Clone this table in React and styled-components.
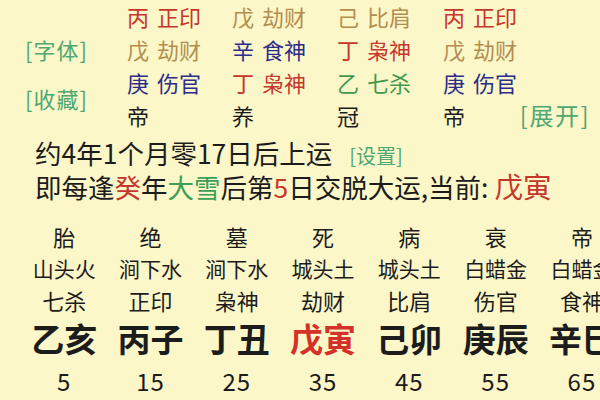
import React from "react";
import styled, {createGlobalStyle} from "styled-components";

const GlobalStyle = createGlobalStyle`
  html, body {
    margin: 0;
    padding: 0;
    background: #fcf7c8;
  }
  body {
    font-family: "Noto Sans CJK SC", "Noto Sans", sans-serif;
    color: #1c1c1c;
  }
`;

const colors = {
    red: "#c5372c",
    tan: "#b48e4f",
    navy: "#2c2c8a",
    green: "#3f9a4c",
    link: "#4ea874",
    ink: "#1c1c1c",
};

const Page = styled.div`
  width: 600px;
  height: 400px;
  overflow: hidden;
  background: #fcf7c8;
`;

const PillarGrid = styled.div`
  display: grid;
  grid-template-columns: 127px 105px 105px 106px 1fr;
  grid-template-rows: repeat(4, 33px);
  margin-top: -1px;
`;

const Label = styled.div`
  grid-column: 1;
  grid-row: ${p => p.$row};
  align-self: center;
  padding-left: 25px;
  font-size: 22px;
  line-height: 26px;
  letter-spacing: 1px;
  color: ${colors.link};
`;

const Cell = styled.div`
  display: flex;
  align-items: center;
  gap: 8px;
  font-size: 22px;
  color: ${p => p.$color || colors.ink};
  white-space: nowrap;
`;

const Expand = styled.span`
  margin-left: auto;
  margin-right: 10px;
  font-size: 24px;
  letter-spacing: 1.5px;
  color: ${colors.link};
`;

const Info = styled.div`
  padding-left: 35px;
  margin-top: 5px;
`;

const InfoLine = styled.div`
  display: flex;
  align-items: baseline;
  height: 33px;
  line-height: 33px;
  font-size: 26.5px;
  white-space: nowrap;
`;

const Tint = styled.span`
  color: ${p => p.$color};
  font-size: ${p => p.$size || "inherit"};
`;

const Setting = styled.span`
  margin-left: 17px;
  font-size: 20px;
  color: ${colors.link};
`;

const LuckGrid = styled.div`
  display: grid;
  grid-template-columns: repeat(8, 86.3px);
  grid-template-rows: 32px 32px 32px 44px 40px;
  padding-left: 21px;
  margin-top: 18px;
  text-align: center;
  white-space: nowrap;
`;

const LuckText = styled.div`
  display: flex;
  align-items: center;
  justify-content: center;
  font-size: ${p => p.$size}px;
  font-weight: ${p => (p.$bold ? 700 : 400)};
  letter-spacing: ${p => p.$spacing || 0}px;
  color: ${p => p.$color || colors.ink};
`;

const pillars = [
    [["丙", "正印", "red"], ["戊", "劫财", "tan"], ["庚", "伤官", "navy"], "帝"],
    [["戊", "劫财", "tan"], ["辛", "食神", "navy"], ["丁", "枭神", "red"], "养"],
    [["己", "比肩", "tan"], ["丁", "枭神", "red"], ["乙", "七杀", "green"], "冠"],
    [["丙", "正印", "red"], ["戊", "劫财", "tan"], ["庚", "伤官", "navy"], "帝"],
];

const luck = [
    ["胎", "山头火", "七杀", "乙亥", "5"],
    ["绝", "涧下水", "正印", "丙子", "15"],
    ["墓", "涧下水", "枭神", "丁丑", "25"],
    ["死", "城头土", "劫财", "戊寅", "35", true],
    ["病", "城头土", "比肩", "己卯", "45"],
    ["衰", "白蜡金", "伤官", "庚辰", "55"],
    ["帝", "白蜡金", "食神", "辛巳", "65"],
];

function App() {
    return (
        <Page>
            <GlobalStyle/>
            <PillarGrid>
                <Label $row={2}>[字体]</Label>
                <Label $row="3 / span 2">[收藏]</Label>
                {pillars.map((col, c) => (
                    <React.Fragment key={c}>
                        {col.slice(0, 3).map(([stem, god, tone], r) => (
                            <Cell key={r} $color={colors[tone]} style={{gridColumn: c + 2, gridRow: r + 1}}>
                                <span>{stem}</span><span>{god}</span>
                            </Cell>
                        ))}
                        <Cell style={{gridColumn: c + 2, gridRow: 4}}>
                            {col[3]}
                            {c === 3 ? <Expand>[展开]</Expand> : null}
                        </Cell>
                    </React.Fragment>
                ))}
            </PillarGrid>
            <Info>
                <InfoLine>
                    约4年1个月零17日后上运
                    <Setting>[设置]</Setting>
                </InfoLine>
                <InfoLine>
                    即每逢<Tint $color={colors.red}>癸</Tint>年<Tint $color="#3e9e57">大雪</Tint>后第<Tint $color={colors.red}>5</Tint>日交脱大运,当前:&nbsp;
                    <Tint $color={colors.red} $size="28.5px">戊寅</Tint>
                </InfoLine>
            </Info>
            <LuckGrid>
                {luck.map(([stage, nayin, god, pair, age, current], i) => (
                    <React.Fragment key={i}>
                        <LuckText $size={22} style={{gridColumn: i + 1, gridRow: 1}}>{stage}</LuckText>
                        <LuckText $size={21} style={{gridColumn: i + 1, gridRow: 2}}>{nayin}</LuckText>
                        <LuckText $size={22} style={{gridColumn: i + 1, gridRow: 3}}>{god}</LuckText>
                        <LuckText $size={33} $bold $color={current ? "#d4312a" : undefined}
                                  style={{gridColumn: i + 1, gridRow: 4}}>{pair}</LuckText>
                        <LuckText $size={24} $spacing={1} style={{gridColumn: i + 1, gridRow: 5}}>{age}</LuckText>
                    </React.Fragment>
                ))}
            </LuckGrid>
        </Page>
    );
}

export default App;
